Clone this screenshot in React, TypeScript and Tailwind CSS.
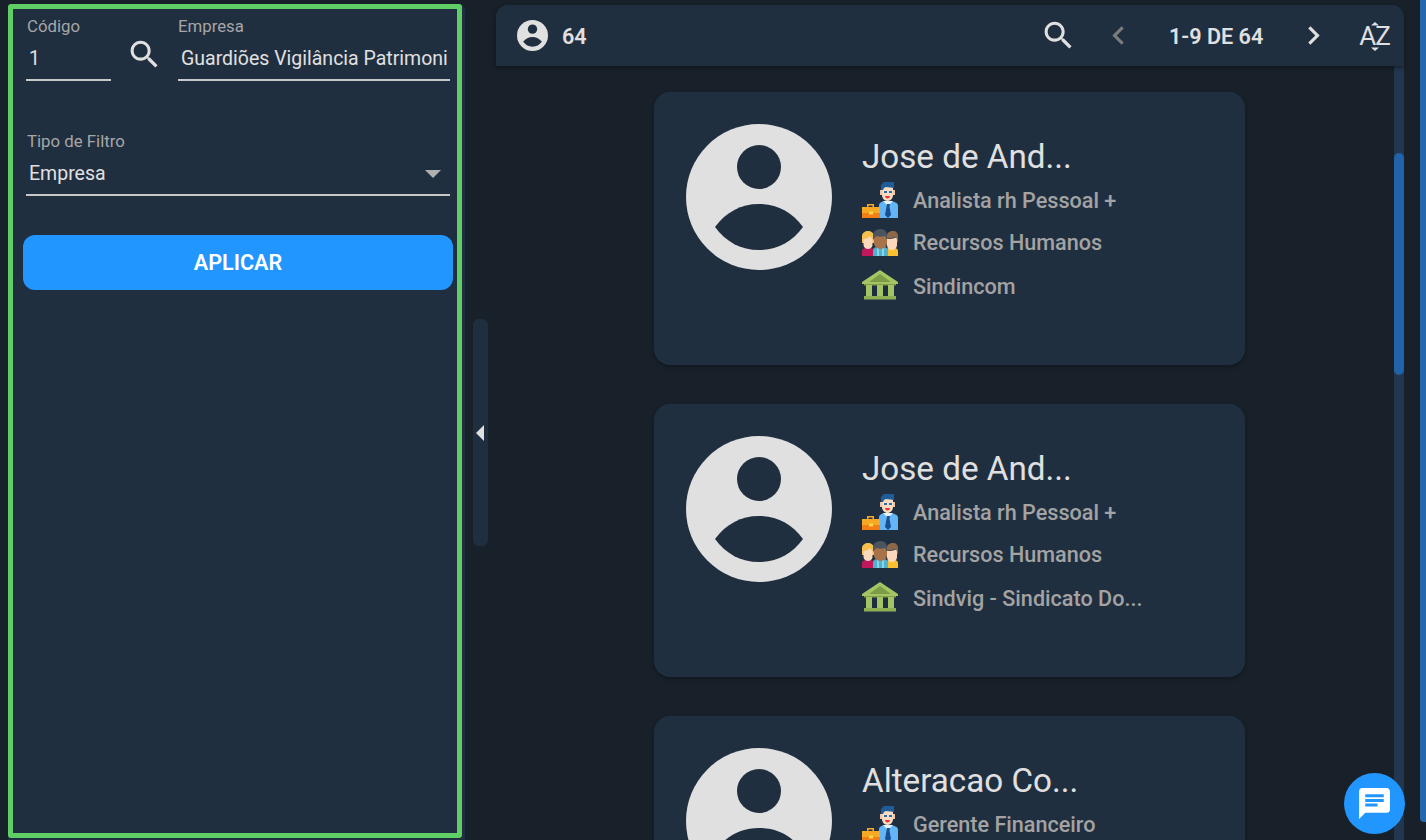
const searchPath =
  "M15.5 14h-.79l-.28-.27C15.41 12.59 16 11.11 16 9.5 16 5.91 13.09 3 9.5 3S3 5.91 3 9.5 5.91 16 9.5 16c1.61 0 3.09-.59 4.23-1.57l.27.28v.79l5 4.99L20.49 19l-4.99-5zm-6 0C7.01 14 5 11.99 5 9.5S7.01 5 9.5 5 14 7.01 14 9.5 11.99 14 9.5 14z";

function SearchIcon() {
  return (
    <svg viewBox="0 0 24 24" className="w-[37px] h-[37px] fill-[#e0e0e0] shrink-0">
      <path d={searchPath} />
    </svg>
  );
}

function Avatar({ className }: { className: string }) {
  return (
    <svg viewBox="0 0 146 146" className={className}>
      <circle cx="73" cy="73" r="73" fill="#e0e0e0" />
      <circle cx="73" cy="43" r="22" fill="#202f40" />
      <path
        d="M29 103C40 88 55 80 73 80C91 80 106 88 117 103C106 118 91 126 73 126C55 126 40 118 29 103Z"
        fill="#202f40"
      />
    </svg>
  );
}

function WorkerIcon() {
  return (
    <svg viewBox="0 0 36 36" className="w-9 h-9 shrink-0 mb-[3px]">
      <path d="M17 36V23c0-2 2-3 5-4h7c4 1 7 2 7 5v12z" fill="#64b5f6" />
      <path d="M21 19l4 4h2l4-4z" fill="#e3f2fd" />
      <path d="M25 22h3l-.5 3 1.500 8-3 3-3-3 1.500-8z" fill="#1a4f8f" />
      <rect x="18" y="8" width="3" height="5" fill="#f0c4a4" />
      <rect x="30" y="8" width="3" height="5" fill="#f0c4a4" />
      <path d="M20 4h11v9c0 3-2.500 6-5.500 6S20 16 20 13z" fill="#fbdcc2" />
      <path d="M19 8V3l3-3h10v6l-8-1-2 1-1 2z" fill="#1f5c99" />
      <rect x="22" y="9" width="3" height="2" fill="#2a6fa8" />
      <rect x="27" y="9" width="3" height="2" fill="#2a6fa8" />
      <path d="M23 14h5c0 1.500-1 2.500-2.500 2.500S23 15.500 23 14z" fill="#e53935" />
      <path d="M5 25v-3h7v3h-1.500v-1.500h-4V25z" fill="#f9a825" />
      <rect x="0" y="25" width="18" height="11" fill="#f9a825" />
      <rect x="0" y="31" width="18" height="5" fill="#f57f17" />
      <rect x="7" y="29.500" width="4" height="3" fill="#ffd54f" />
    </svg>
  );
}

function TeamIcon() {
  return (
    <svg viewBox="0 0 36 27" className="w-9 h-[27px] shrink-0 mb-px">
      <path d="M0 27v-5c0-2 2-3 4-3h6l2 3v5z" fill="#c2185b" />
      <path d="M24 27v-5l2-3h6c2 0 4 1 4 3v5z" fill="#fbc02d" />
      <path d="M0 14V7c0-3 3-5 6-5s6 2 6 5v7z" fill="#f4c04e" />
      <path d="M1.500 10c3 0 5-1 6-3l3 3v6c0 2-2 4-4.500 4S1.500 18 1.500 16z" fill="#fbd9bd" />
      <path d="M25 12V6c0-2 3-4 6-4s5 2 5 5v6h-1l-1-5-9 2z" fill="#8d6748" />
      <path d="M25 10c3 0 6 0 9-1.500l1 2V16c0 3-2.500 5-5 5s-5-2-5-5z" fill="#fad7bb" />
      <path d="M11 27v-6c0-2 2-3 5-3h5c3 0 5 1 5 3v6z" fill="#4fb3cf" />
      <rect x="15" y="19" width="2" height="8" fill="#8bd3e6" />
      <rect x="20" y="19" width="2" height="8" fill="#8bd3e6" />
      <path d="M12 6h13v8c0 3-3 6-6.500 6S12 17 12 14z" fill="#a8734a" />
      <path d="M11 11V6c0-3 3-6 7.500-6S25 3 25 6v5l-2-4c-3 1-6 1-9 0z" fill="#4a5560" />
    </svg>
  );
}

function BankIcon() {
  return (
    <svg viewBox="0 0 36 30" className="w-9 h-[30px] shrink-0 mb-[6px]">
      <path d="M18 0L36 12v2H0v-2z" fill="#a4c564" />
      <path d="M18 4l11 8H7z" fill="#7f9c45" />
      <rect x="2" y="14" width="32" height="1.500" fill="#7f9c45" />
      <rect x="4" y="15" width="6" height="11" fill="#a4c564" />
      <rect x="15" y="15" width="6" height="11" fill="#a4c564" />
      <rect x="26" y="15" width="6" height="11" fill="#a4c564" />
      <rect x="2" y="26" width="32" height="3.500" fill="#8fb052" />
    </svg>
  );
}

function Field({
  label,
  value,
  className,
  labelClass,
}: {
  label: string;
  value: string;
  className: string;
  labelClass?: string;
}) {
  return (
    <div className={className}>
      <div className={`pt-px mb-px text-[16.8px] leading-[22px] text-[#a6a6a6] ${labelClass ?? ""}`}>{label}</div>
      <div className="h-[43px] flex items-center px-[3px] border-b-2 border-[#c8c8c8] text-[19.5px] text-[#e0e0e0] overflow-hidden whitespace-nowrap">
        <span className="block overflow-hidden">{value}</span>
      </div>
    </div>
  );
}

function Card({ name, job, dept, union }: { name: string; job: string; dept: string; union: string }) {
  return (
    <article className="w-[591px] h-[273px] shrink-0 rounded-[16px] bg-[#202f40] shadow-[0_2px_4px_rgba(0,0,0,0.35)] pt-8 pl-8 flex gap-[30px]">
      <Avatar className="w-[146px] h-[146px] shrink-0" />
      <div className="pt-[9px]">
        <h2 className="h-[47px] text-[33.2px] leading-[48px] font-normal text-[#e0e0e0]">{name}</h2>
        <div className="text-[21.6px] font-medium text-[#a3a3a3]">
          <div className="h-[42px] flex items-center gap-[15px]">
            <WorkerIcon />
            <span>{job}</span>
          </div>
          <div className="h-[42px] flex items-center gap-[15px]">
            <TeamIcon />
            <span>{dept}</span>
          </div>
          <div className="h-[47px] flex items-center gap-[15px]">
            <BankIcon />
            <span>{union}</span>
          </div>
        </div>
      </div>
    </article>
  );
}

export default function App() {
  return (
    <div className="relative h-[840px] w-[1426px] overflow-hidden bg-[#18212a] flex font-[Roboto,sans-serif]">
      <aside className="w-[457px] ml-2 mt-1 shrink-0 rounded-t-[6px] bg-[#202f40]">
        <div className="w-[454px] h-[834px] border-[5px] border-[#5fcf65] rounded-[3px] pt-[5px] pl-[8px] pr-[7px]">
          <div className="flex items-start pl-[5px]">
            <Field label="Código" value="1" className="w-[85px]" labelClass="pl-px" />
            <div className="w-[67px] pt-[22px] flex justify-center">
              <SearchIcon />
            </div>
            <Field label="Empresa" value="Guardiões Vigilância Patrimonial" className="flex-1 min-w-0" />
          </div>
          <div className="relative mt-[48px] pl-[5px]">
            <Field label="Tipo de Filtro" value="Empresa" className="w-full" labelClass="pl-px" />
            <svg viewBox="0 0 16 8" className="absolute right-[9px] top-[41px] w-[16px] h-[8px] fill-[#b0b0b0]">
              <path d="M0 0h16L8 8z" />
            </svg>
          </div>
          <button className="mt-[39px] ml-[2px] pt-[2px] w-[430px] h-[55px] rounded-[12px] bg-[#2196ff] text-white text-[21.6px] font-semibold">
            APLICAR
          </button>
        </div>
      </aside>

      <div className="ml-2 mt-[319px] w-[15px] h-[227px] shrink-0 rounded-[6px] bg-[#202f40] flex items-center">
        <svg viewBox="0 0 8 16" className="ml-[3px] w-2 h-4 fill-[#e0e0e0]">
          <path d="M8 0v16L0 8z" />
        </svg>
      </div>

      <main className="ml-2 mt-[5px] w-[908px] shrink-0 flex flex-col">
        <header className="relative z-10 h-[61px] shrink-0 rounded-t-[12px] bg-[#202f40] shadow-[0_2px_4px_rgba(0,0,0,0.4)] flex items-center pl-[21px] text-[#e0e0e0] text-[21.6px] font-semibold">
          <Avatar className="w-[31px] h-[31px] shrink-0" />
          <span className="ml-[14px] pt-[3px]">64</span>
          <div className="ml-auto flex items-center">
            <SearchIcon />
            <svg viewBox="0 0 24 24" className="ml-[23px] w-[37px] h-[37px] fill-[#7c7c7c]">
              <path d="M15.41 7.41L14 6l-6 6 6 6 1.41-1.41L10.83 12z" />
            </svg>
            <span className="ml-[32px] pt-[3px] w-[100px] whitespace-nowrap">1-9 DE 64</span>
            <svg viewBox="0 0 24 24" className="ml-[26px] w-[37px] h-[37px] fill-[#e0e0e0]">
              <path d="M10 6L8.590 7.410 13.170 12l-4.580 4.590L10 18l6-6z" />
            </svg>
            <div className="relative ml-[26px] mr-[13px] w-[33px] text-[26px] leading-[30px] font-normal tracking-[-1px] text-center whitespace-nowrap">
              AZ
              <svg viewBox="0 0 8 29" className="absolute left-[13px] top-px w-2 h-[29px] fill-[#e0e0e0]">
                <path d="M4 0l4 3.500H0zM0 25.500h8l-4 3.500z" />
              </svg>
            </div>
          </div>
        </header>
        <div className="flex-1 min-h-0 flex">
          <div className="flex-1 min-w-0 overflow-hidden pt-[26px] pl-[158px] flex flex-col gap-[39px]">
            <Card name="Jose de And..." job="Analista rh Pessoal +" dept="Recursos Humanos" union="Sindincom" />
            <Card name="Jose de And..." job="Analista rh Pessoal +" dept="Recursos Humanos" union="Sindvig - Sindicato Do..." />
            <Card name="Alteracao Co..." job="Gerente Financeiro" dept="Financeiro" union="Sindincom" />
          </div>
          <div className="w-[10px] shrink-0 bg-[#22374f] pt-[87px]">
            <div className="h-[222px] rounded-[5px] bg-[#2063a8]" />
          </div>
        </div>
      </main>

      <div className="ml-auto w-[6px] h-[822px] shrink-0 rounded-bl-[4px] bg-[#2468ad]" />

      <button className="absolute left-[1344px] top-[773px] w-[61px] h-[61px] rounded-full bg-[#2196ff] flex items-center justify-center">
        <svg viewBox="0 0 24 24" className="w-[37px] h-[37px] fill-white">
          <path d="M20 2H4c-1.100 0-1.990.9-1.990 2L2 22l4-4h14c1.100 0 2-.9 2-2V4c0-1.100-.9-2-2-2zM6 9h12v2H6V9zm8 5H6v-2h8v2zm4-6H6V6h12v2z" />
        </svg>
      </button>
    </div>
  );
}
